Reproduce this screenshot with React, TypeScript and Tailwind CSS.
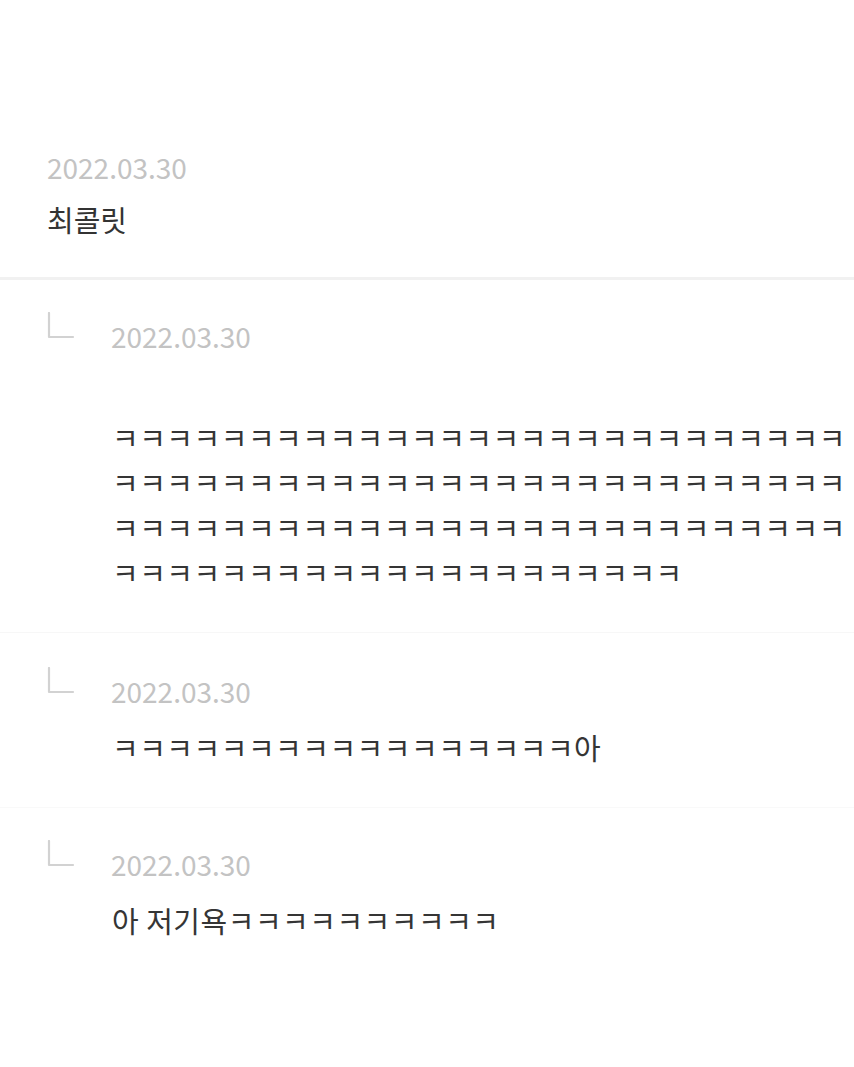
import React from "react";

const font = { fontFamily: '"Noto Sans CJK KR", "Noto Sans", sans-serif' };

function Corner() {
  return (
    <svg width="28" height="28" viewBox="0 0 28 28" className="mt-[-6px] shrink-0">
      <path d="M2 1 V25 H26" fill="none" stroke="#d2d2d2" strokeWidth="2.2" strokeLinecap="round" strokeLinejoin="round" />
    </svg>
  );
}

function Reply({ text, lead }: { text: string[]; lead?: boolean }) {
  return (
    <div className="px-[47px]">
      <div className="flex items-start">
        <Corner />
        <div className="ml-[36px] text-[28px] leading-[36px] text-[#c3c3c3]">2022.03.30</div>
      </div>
      <div className={`pl-[65px] mt-[16px] text-[29px] leading-[45px] tracking-[0.5px] text-[#353535] ${lead ? "pt-[45px]" : ""}`}>
        {text.map((t, i) => (
          <div key={i} className="whitespace-nowrap">{t}</div>
        ))}
      </div>
    </div>
  );
}

export default function App() {
  const k = (n: number) => "ㅋ".repeat(n);
  return (
    <div className="w-[854px] h-[1067px] bg-white overflow-hidden" style={font}>
      <div className="pt-[149px] pb-[35px] px-[47px]">
        <div className="text-[28px] leading-[36px] text-[#c3c3c3]">2022.03.30</div>
        <div className="mt-[12px] text-[29px] leading-[45px] text-[#333333]">최콜릿</div>
      </div>
      <div className="h-[3px] bg-[#f1f1f1]" />
      <div className="pt-[38px]">
        <Reply lead text={[k(27), k(27), k(27), k(21)]} />
      </div>
      <div className="mt-[37px] h-px bg-[#f7f7f7]" />
      <div className="pt-[40px]">
        <Reply text={[k(17) + "아"]} />
      </div>
      <div className="mt-[37px] h-px bg-[#f9f9f9]" />
      <div className="pt-[38px]">
        <Reply text={["아 저기욕" + k(10)]} />
      </div>
    </div>
  );
}
